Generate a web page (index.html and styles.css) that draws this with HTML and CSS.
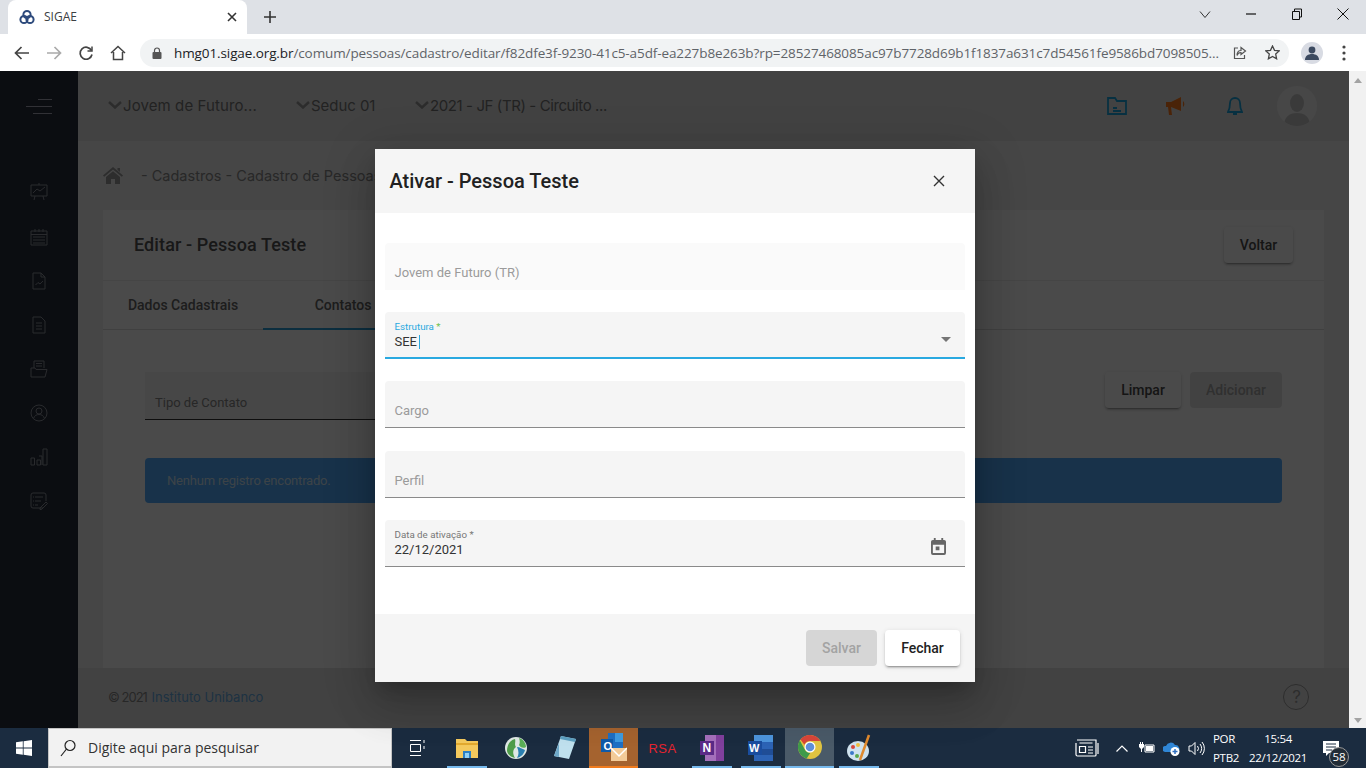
FILE: index.html
```html
<!DOCTYPE html>
<html lang="pt-BR">

<head>
    <meta charset="UTF-8">
    <title>SIGAE</title>
    <link rel="stylesheet" href="styles.css">
</head>

<body>
    <div class="tabstrip">
        <div class="tab">
            <svg class="favicon" width="16" height="16" viewBox="0 0 16 16" fill="none" stroke="#2d4a7c" stroke-width="2"><circle cx="8" cy="5.5" r="3.6"/><circle cx="5" cy="10.5" r="3.6"/><circle cx="11" cy="10.5" r="3.6"/></svg>
            <span class="tab-title">SIGAE</span>
            <svg width="10" height="10" viewBox="0 0 10 10" stroke="#333" stroke-width="1.6"><path d="M1 1l8 8M9 1l-8 8"/></svg>
        </div>
        <svg class="new-tab" width="12" height="12" viewBox="0 0 12 12" stroke="#333" stroke-width="1.6"><path d="M6 0v12M0 6h12"/></svg>
        <div class="win-controls">
            <svg width="12" height="12" viewBox="0 0 12 12" fill="none" stroke="#333"><path d="M1 3.5l5 6 5-6"/></svg>
            <svg width="12" height="12" viewBox="0 0 12 12" fill="none" stroke="#111" stroke-width="1.2"><path d="M1 6h10"/></svg>
            <svg width="12" height="12" viewBox="0 0 12 12" fill="none" stroke="#111"><path d="M1.5 3.5h7v8h-7zM3.5 3.5v-2.500h7v8h-2"/></svg>
            <svg width="12" height="12" viewBox="0 0 12 12" fill="none" stroke="#111"><path d="M.5.5l11 11M11.500.5l-11 11"/></svg>
        </div>
    </div>

    <div class="toolbar">
        <svg width="16" height="14" viewBox="0 0 16 14" fill="none" stroke="#444" stroke-width="1.7"><path d="M15 7H2M7.500 1L1.500 7l6 6"/></svg>
        <svg width="16" height="14" viewBox="0 0 16 14" fill="none" stroke="#aaa" stroke-width="1.7"><path d="M1 7h13M8.500 1l6 6-6 6"/></svg>
        <svg width="16" height="16" viewBox="0 0 16 16" fill="none" stroke="#444" stroke-width="1.7"><path d="M13.500 5.500A6 6 0 1 0 14 9.500"/><path d="M14 1.500v4.500H9.500" stroke-width="1.500"/></svg>
        <svg width="16" height="16" viewBox="0 0 16 16" fill="none" stroke="#444" stroke-width="1.500"><path d="M1 8l7-6.500L15 8M3.500 7v7.500h9V7"/></svg>
        <div class="omnibox">
            <svg width="10" height="12" viewBox="0 0 10 12" fill="#555"><rect x="0.500" y="5" width="9" height="7" rx="1"/><path d="M2.500 5V3.500a2.500 2.500 0 0 1 5 0V5" fill="none" stroke="#555" stroke-width="1.200"/></svg>
            <span class="url"><b>hmg01.sigae.org.br</b>/comum/pessoas/cadastro/editar/f82dfe3f-9230-41c5-a5df-ea227b8e263b?rp=28527468085ac97b7728d69b1f1837a631c7d54561fe9586bd7098505...</span>
            <svg width="14" height="14" viewBox="0 0 14 14" fill="none" stroke="#555" stroke-width="1.200"><path d="M5 2H1.500v10.500h10V9M8 1.500l4.500 3.500L8 8.500V6.500c-2 0-3.500 1-4 3 0-3 1.500-5 4-5z"/></svg>
            <svg width="15" height="15" viewBox="0 0 15 15" fill="none" stroke="#444" stroke-width="1.300"><path d="M7.500 1l2 4.300 4.700.6-3.500 3.200.9 4.700-4.100-2.300-4.100 2.300.9-4.700L.8 5.900l4.700-.6z"/></svg>
        </div>
        <div class="profile">
            <svg width="14" height="14" viewBox="0 0 14 14" fill="#3c4a60"><circle cx="7" cy="4" r="3.400"/><path d="M0 14c0-4 3-6 7-6s7 2 7 6z"/></svg>
        </div>
        <svg class="dots" width="4" height="16" viewBox="0 0 4 16" fill="#444"><circle cx="2" cy="2" r="1.600"/><circle cx="2" cy="8" r="1.600"/><circle cx="2" cy="14" r="1.600"/></svg>
    </div>

    <div class="viewport">
        <div class="app">
            <aside class="sidebar">
                <div class="burger"><i class="line-a"></i><i class="line-b"></i><i class="line-c"></i></div>
                <nav class="side-nav">
                    <svg width="18" height="20" viewBox="0 0 18 20"><path d="M1 3h16v11H1zM3 11l4-4 3 2 5-4M9 1v2M5 14l-1 4M13 14l1 4"/></svg>
                    <svg width="18" height="18" viewBox="0 0 18 18"><path d="M1 3h16v14H1zM1 6.500h16M5 1v3M9 1v3M13 1v3M3 9h12M3 12h12M3 15h12"/></svg>
                    <svg width="14" height="18" viewBox="0 0 14 18"><path d="M1 1h8l4 4v12H1zM9 1v4h4M3.500 13l2.500-2.500 2 1.500 3-3"/></svg>
                    <svg width="14" height="18" viewBox="0 0 14 18"><path d="M1 1h8l4 4v12H1zM4 7h6M4 10h6M4 13h6"/></svg>
                    <svg width="18" height="18" viewBox="0 0 18 18"><path d="M4 8V1h10v7M6 3.500h6M6 6h6M1 17V8h4l1 1.500h11L15 17z"/></svg>
                    <svg width="18" height="18" viewBox="0 0 18 18"><circle cx="9" cy="9" r="8"/><circle cx="9" cy="7" r="3"/><path d="M3.500 14.500c1-3 3-4 5.500-4s4.500 1 5.500 4"/></svg>
                    <svg width="18" height="18" viewBox="0 0 18 18"><path d="M1 10h3.500v7H1zM7 12h3.500v5H7zM13 1h4v16h-4zM9 8h3v9"/></svg>
                    <svg width="18" height="18" viewBox="0 0 18 18"><path d="M13 16H3a2 2 0 0 1-2-2V3a2 2 0 0 1 2-2h11a2 2 0 0 1 2 2v6M5 5h8M3 5h1M5 9h6M3 9h1M5 13h3M3 13h1M10 16l6-6 1.500 1.500-6 6H10z"/></svg>
                </nav>
            </aside>
            <div class="content">
                <header class="topbar">
                    <div class="context-list">
                        <span class="context"><svg width="14" height="8" viewBox="0 0 14 8" fill="none" stroke-width="2.500"><path d="M1 1l6 5.500L13 1"/></svg>Jovem de Futuro...</span>
                        <span class="context"><svg width="14" height="8" viewBox="0 0 14 8" fill="none" stroke-width="2.500"><path d="M1 1l6 5.500L13 1"/></svg>Seduc 01</span>
                        <span class="context"><svg width="14" height="8" viewBox="0 0 14 8" fill="none" stroke-width="2.500"><path d="M1 1l6 5.500L13 1"/></svg>2021 - JF (TR) - Circuito ...</span>
                    </div>
                    <div class="top-icons">
                        <svg class="top-folder" width="20" height="18" viewBox="0 0 20 18" fill="none" stroke="#1aa5e0" stroke-width="1.800"><path d="M1 1h7l2 3h9v13H1zM6 11h4M6 14h8"/></svg>
                        <svg class="top-horn" width="21" height="20" viewBox="0 0 21 20" fill="#ff7a1c"><path d="M0 6h5l10-5v14L5 11l1 8H3l-1-8H0z"/><path d="M17 5a4 4 0 0 1 0 6z"/></svg>
                        <svg class="top-bell" width="16" height="20" viewBox="0 0 16 20" fill="none" stroke="#1aa5e0" stroke-width="1.800"><path d="M8 2a5 5 0 0 1 5 5c0 4 1 7 2 9H1c1-2 2-5 2-9a5 5 0 0 1 5-5zM6 18h4"/></svg>
                        <div class="top-avatar">
                            <svg width="26" height="32" viewBox="0 0 26 32" fill="#c8c8c8"><ellipse cx="13" cy="9" rx="7" ry="9"/><path d="M0 32c0-9 5-13 13-13s13 4 13 13z"/></svg>
                        </div>
                    </div>
                </header>
                <main class="main">
                    <div class="crumbs">
                        <svg width="20" height="17" viewBox="0 0 20 17" fill="#9a9a9a"><path d="M10 0l10 8.500-1.200 1.300L10 2.500 1.200 9.800 0 8.500zM3 10l7-5.800 7 5.800v7h-5v-5H8v5H3zM14.500 1h2.500v4l-2.500-2z"/></svg>
                        <span>- Cadastros - Cadastro de Pessoas</span>
                    </div>
                    <section class="card">
                        <div class="card-head">
                            <h1>Editar - Pessoa Teste</h1>
                            <button class="btn btn-voltar">Voltar</button>
                        </div>
                        <div class="tabs">
                            <span class="page-tab">Dados Cadastrais</span>
                            <span class="page-tab page-tab-on">Contatos</span>
                        </div>
                        <div class="card-body">
                            <div class="contact-row">
                                <div class="contact-type">Tipo de Contato</div>
                                <div class="contact-btns">
                                    <button class="btn btn-limpar">Limpar</button>
                                    <button class="btn btn-add">Adicionar</button>
                                </div>
                            </div>
                            <div class="alert">Nenhum registro encontrado.</div>
                        </div>
                    </section>
                </main>
                <footer class="foot">
                    <span>© 2021 <span class="foot-link">Instituto Unibanco</span></span>
                    <span class="help">?</span>
                </footer>
            </div>

            <div class="backdrop">
                <div class="modal">
                    <div class="modal-head">
                        <h2>Ativar - Pessoa Teste</h2>
                        <svg width="12" height="12" viewBox="0 0 12 12" stroke="#333" stroke-width="1.400"><path d="M1 1l10 10M11 1L1 11"/></svg>
                    </div>
                    <div class="modal-body">
                        <div class="field field-off"><span class="field-hint">Jovem de Futuro (TR)</span></div>
                        <div class="field field-on">
                            <div class="field-text">
                                <span class="field-label">Estrutura <em>*</em></span>
                                <span class="field-value">SEE<i class="caret"></i></span>
                            </div>
                            <i class="select-arrow"></i>
                        </div>
                        <div class="field"><span class="field-hint">Cargo</span></div>
                        <div class="field"><span class="field-hint">Perfil</span></div>
                        <div class="field">
                            <div class="field-text">
                                <span class="field-label field-label-grey">Data de ativação *</span>
                                <span class="field-value">22/12/2021</span>
                            </div>
                            <svg class="cal" width="15" height="17" viewBox="0 0 16 18" fill="#666"><path d="M3 0h2v2h6V0h2v2h1a2 2 0 0 1 2 2v12a2 2 0 0 1-2 2H2a2 2 0 0 1-2-2V4a2 2 0 0 1 2-2h1zM2 7v9h12V7zM5 9h4v4H5z"/></svg>
                        </div>
                    </div>
                    <div class="modal-foot">
                        <button class="btn btn-salvar">Salvar</button>
                        <button class="btn btn-fechar">Fechar</button>
                    </div>
                </div>
            </div>
        </div>
        <div class="scrollbar"><i class="arrow-up"></i><i class="arrow-down"></i></div>
    </div>

    <div class="taskbar">
        <div class="start">
            <svg width="16" height="16" viewBox="0 0 16 16" fill="#fff"><path d="M0 2.300l6.800-1v6.300H0zM7.600 1.200L16 0v7.600H7.600zM0 8.400h6.800v6.300l-6.800-1zM7.600 8.400H16V16l-8.400-1.200z"/></svg>
        </div>
        <div class="search">
            <svg width="16" height="18" viewBox="0 0 16 18" fill="none" stroke="#222" stroke-width="1.200"><circle cx="10" cy="6.500" r="5"/><path d="M6.500 10L1 17"/></svg>
            <span>Digite aqui para pesquisar</span>
        </div>
        <div class="task-apps">
            <div class="task-app">
                <svg width="16" height="18" viewBox="0 0 16 18" fill="none" stroke="#fff"><path d="M.5 5.500h10v7H.5zM0 1.500h11M0 16.500h11M14 1v3M14 7v3"/></svg>
            </div>
            <div class="task-app task-open">
                <svg width="22" height="20" viewBox="0 0 22 20"><path d="M0 1h9l2 2h11v17H0z" fill="#f4c95d"/><path d="M0 5h22v2H0z" fill="#e2a92f"/><path d="M7 13h8v7H7z" fill="#2a7fc4"/><path d="M9 15h4v5H9z" fill="#8fd0f5"/></svg>
            </div>
            <div class="task-app">
                <svg width="22" height="22" viewBox="0 0 22 22"><circle cx="11" cy="11" r="11" fill="#dfe8e4"/><path d="M2 14c0-6 3-11 8-12 1 3-1 5 1 8-3 2-4 6-1 11-4-1-7-3-8-7z" fill="#4f9d4a"/><path d="M14 1c4 1 7 5 7 9-3 2-6 0-7-2 1-2 1-4 0-7z" fill="#5bae57"/><path d="M12 10c3 0 5 2 8 3-1 4-4 7-8 8 2-3 2-7 0-11z" fill="#2a7fb0"/></svg>
            </div>
            <div class="task-app">
                <svg width="22" height="26" viewBox="0 0 22 26"><path d="M7 1l15 3-7 20-15-3z" fill="#bfe0ee"/><path d="M7 1l15 3-1 3L6 4z" fill="#5c9fc0"/><path d="M5 8L0 21l5 1z" fill="#6fa8c8"/></svg>
            </div>
            <div class="task-app task-outlook">
                <svg width="26" height="28" viewBox="0 0 26 28"><path d="M7 0h15v18H7z" fill="#1f6fc4"/><path d="M14 0h8v9h-8z" fill="#3f9be0"/><path d="M0 6h12v13H0z" fill="#0f5aa8"/><text class="svg-letter" x="2.500" y="16.500" font-size="11" fill="#fff">O</text><path d="M10 15h16v13H10z" fill="#f3cb98"/><path d="M10 15l8 8 8-8" fill="none" stroke="#fff" stroke-width="1.500"/></svg>
            </div>
            <div class="task-app"><span class="rsa">RSA</span></div>
            <div class="task-app task-open">
                <svg width="24" height="26" viewBox="0 0 24 26"><path d="M5 0h19v26H5z" fill="#a46fbb"/><path d="M16 0h8v26h-8z" fill="#80409d"/><path d="M0 6h14v14H0z" fill="#5b2a87"/><text class="svg-letter" x="2.500" y="17" font-size="12" fill="#fff">N</text></svg>
            </div>
            <div class="task-app task-open">
                <svg width="25" height="26" viewBox="0 0 25 26"><path d="M6 0h19v26H6z" fill="#2c63b5"/><path d="M6 0h19v7H6z" fill="#4d95dc"/><path d="M6 14h19v6H6z" fill="#1f4d96"/><path d="M0 6h14v14H0z" fill="#1a4d9e"/><text class="svg-letter" x="1" y="17" font-size="11" fill="#fff">W</text></svg>
            </div>
            <div class="task-app task-active">
                <svg width="24" height="24" viewBox="0 0 24 24"><circle cx="12" cy="12" r="12" fill="#e0c341"/><path d="M12 0a12 12 0 0 1 10.400 6H12a6 6 0 0 0-5.600 3.800L2.500 4.500A12 12 0 0 1 12 0z" fill="#d8463a"/><path d="M1.800 5.500l5 9a6 6 0 0 0 5.400 3.500L8.700 23.500A12 12 0 0 1 1.800 5.500z" fill="#3f9a4a"/><circle cx="12" cy="12" r="5.500" fill="#fff"/><circle cx="12" cy="12" r="4.300" fill="#5f8fd8"/></svg>
            </div>
            <div class="task-app task-open">
                <svg width="24" height="28" viewBox="0 0 24 28"><ellipse cx="11" cy="17" rx="11" ry="10" fill="#cfe2ee"/><circle cx="6" cy="13" r="2" fill="#d8463a"/><circle cx="11" cy="11" r="2" fill="#f0c040"/><circle cx="5" cy="19" r="2" fill="#3a78c8"/><circle cx="10" cy="22" r="2" fill="#5aa84f"/><path d="M22 1L13 26" stroke="#e08a2e" stroke-width="2.500"/></svg>
            </div>
        </div>
        <div class="tray">
            <svg class="tray-news" width="24" height="18" viewBox="0 0 24 18" fill="none" stroke="#fff" stroke-width="1.200"><path d="M2 1h19v15a1 1 0 0 1-1 1H2.500A1.500 1.500 0 0 1 1 15.500V4M4.500 4h13M4.500 7.500h6v6h-6zM13 8h5M13 11h5M13 14h5M23 4v11"/></svg>
            <svg class="tray-up" width="12" height="7" viewBox="0 0 12 7" fill="none" stroke="#fff" stroke-width="1.200"><path d="M.5 6.500L6 1l5.500 5.500"/></svg>
            <svg class="tray-power" width="16" height="12" viewBox="0 0 16 12" fill="#fff"><path d="M0 2h1v-2h1v2h1v-2h1v2h1v3L3 7v3H2V7L0 5z"/><path d="M6 3h9v7H6z" fill="none" stroke="#fff"/><path d="M7 4h7v5H7z"/></svg>
            <svg class="tray-cloud" width="18" height="15" viewBox="0 0 18 15"><path d="M2 11a3 3 0 0 1 1-6 5 5 0 0 1 9-1 4 4 0 0 1 3 7z" fill="#2f86d6"/><circle cx="12" cy="10.500" r="4.500" fill="#fff"/><path d="M9.500 10.500h5M12 8v5" stroke="#2f6fc0" stroke-width="1.500"/></svg>
            <svg class="tray-sound" width="17" height="15" viewBox="0 0 17 15" fill="none" stroke="#fff"><path d="M1 5h2.500L7 1.500v12L3.500 10H1zM9.500 5a4 4 0 0 1 0 5M12 3a7 7 0 0 1 0 9M14 1a10 10 0 0 1 0 13"/></svg>
            <div class="tray-lang"><span>POR</span><span>PTB2</span></div>
            <div class="tray-clock"><span>15:54</span><span>22/12/2021</span></div>
            <div class="tray-notify">
                <svg width="16" height="15" viewBox="0 0 16 15" fill="#fff"><path d="M0 0h16v12H6l-3 3v-3H0z"/><path d="M3 3h10M3 6h10M3 9h6" stroke="#1b2c40"/></svg>
                <span class="notify-count">58</span>
            </div>
        </div>
    </div>
</body>

</html>
```

FILE: styles.css
```css
html,
body {
    height: 100%;
    margin: 0;
    padding: 0;
}

body {
    display: flex;
    flex-direction: column;
    overflow: hidden;
    font-family: Roboto, "Liberation Sans", sans-serif;
}

button {
    font-family: inherit;
}

svg {
    display: block;
    flex: none;
}

/* browser frame */
.tabstrip {
    height: 34px;
    background: #dee1e6;
    display: flex;
    align-items: flex-start;
    padding-left: 8px;
}

.tab {
    width: 239px;
    height: 34px;
    box-sizing: border-box;
    background: #fff;
    border-radius: 8px 8px 0 0;
    display: flex;
    align-items: center;
    padding: 0 10px 1px 11px;
}

.favicon {
    margin-right: 9px;
}

.tab-title {
    flex: auto;
    font: 12px "Open Sans", sans-serif;
    color: #3c4043;
}

.new-tab {
    margin: 11px 0 0 17px;
}

.win-controls {
    margin-left: auto;
    display: flex;
    gap: 34px;
    padding: 8px 17px 0 0;
}

.toolbar {
    height: 37px;
    background: #fff;
    display: flex;
    align-items: center;
    gap: 16px;
    padding-left: 14px;
    box-sizing: border-box;
}

.omnibox {
    width: 1149px;
    height: 28px;
    margin-left: -2px;
    box-sizing: border-box;
    padding: 0 9px 0 12px;
    background: #f1f3f4;
    border-radius: 14px;
    display: flex;
    align-items: center;
    gap: 7px;
}

.url {
    flex: auto;
    margin-left: 5px;
    white-space: nowrap;
    font: 13.500px "Open Sans", sans-serif;
    letter-spacing: -0.100px;
    color: #5f6368;
}

.url b {
    font-weight: 400;
    color: #202124;
}

.omnibox > svg:nth-of-type(2) {
    margin-right: 11px;
}

.profile {
    width: 22px;
    height: 22px;
    border-radius: 50%;
    background: #d8dbe3;
    display: flex;
    align-items: center;
    justify-content: center;
    margin-left: -4px;
}

.dots {
    margin-left: 3px;
}

/* page under the dialog */
.viewport {
    height: 657px;
    display: flex;
}

.app {
    flex: auto;
    display: flex;
    position: relative;
    background: #f0f0f0;
    min-width: 0;
}

.scrollbar {
    width: 17px;
    background: #f1f1f1;
    display: flex;
    flex-direction: column;
    justify-content: space-between;
    align-items: center;
    padding: 7px 0 5px;
    box-sizing: border-box;
}

.arrow-up,
.arrow-down {
    width: 0;
    height: 0;
    border-left: 4px solid transparent;
    border-right: 4px solid transparent;
}

.arrow-up {
    border-bottom: 5px solid #a3a3a3;
}

.arrow-down {
    border-top: 5px solid #a3a3a3;
}

.sidebar {
    width: 78px;
    flex: none;
    background: #282e3c;
}

.burger {
    padding: 28px 26px 0;
    display: flex;
    flex-direction: column;
    align-items: flex-end;
    gap: 6px;
}

.burger i {
    height: 1px;
    background: #aab;
}

.line-a {
    width: 14px;
}

.line-b {
    width: 26px;
}

.line-c {
    width: 19px;
}

.side-nav {
    margin-top: 68px;
    display: flex;
    flex-direction: column;
    align-items: center;
    gap: 26px;
}

.side-nav svg {
    fill: none;
    stroke: #8d929c;
    stroke-width: 1;
}

.content {
    flex: auto;
    min-width: 0;
    display: flex;
    flex-direction: column;
}

.topbar {
    height: 70px;
    flex: none;
    background: #e4e4e4;
    display: flex;
    align-items: center;
    padding-left: 30px;
    padding-right: 32px;
}

.context-list {
    display: flex;
    padding-bottom: 2px;
}

.context {
    display: flex;
    align-items: center;
    gap: 1px;
    font: 15px Inter, sans-serif;
    color: #777;
}

.context svg {
    stroke: #999;
}

.context:nth-child(1) {
    width: 188px;
    letter-spacing: 0.100px;
}

.context:nth-child(2) {
    width: 119px;
    letter-spacing: -0.050px;
}

.context:nth-child(3) {
    letter-spacing: -0.400px;
}

.top-icons {
    margin-left: auto;
    display: flex;
    align-items: center;
}

.top-horn {
    margin-left: 39px;
}

.top-bell {
    margin-left: 40px;
}

.top-avatar {
    width: 40px;
    height: 40px;
    margin-left: 34px;
    border-radius: 50%;
    background: #f4f4f4;
    display: flex;
    justify-content: center;
    align-items: flex-end;
    overflow: hidden;
}

.main {
    flex: auto;
    background: #f0f0f0;
    padding: 0 25px;
    display: flex;
    flex-direction: column;
    min-height: 0;
}

.crumbs {
    height: 69px;
    flex: none;
    display: flex;
    align-items: center;
    gap: 18px;
    font: 14.500px Inter, sans-serif;
    color: #8a8a8a;
}

.card {
    flex: auto;
    background: #fff;
    display: flex;
    flex-direction: column;
}

.card-head {
    height: 70px;
    flex: none;
    display: flex;
    align-items: center;
    justify-content: space-between;
    padding: 0 31px;
    border-bottom: 1px solid #eee;
}

.card-head h1 {
    margin: 0 0 2px;
    font-size: 18px;
    font-weight: 500;
    letter-spacing: 0.100px;
    color: #555;
}

.tabs {
    height: 48px;
    flex: none;
    display: flex;
    border-bottom: 1px solid #ddd;
}

.page-tab {
    width: 160px;
    display: flex;
    align-items: center;
    justify-content: center;
    font-size: 14px;
    font-weight: 500;
    color: #666;
    box-sizing: border-box;
}

.page-tab-on {
    border-bottom: 2px solid #2a9fd8;
    margin-bottom: -1px;
}

.card-body {
    padding: 42px 42px 0;
}

.contact-row {
    display: flex;
    justify-content: space-between;
    align-items: flex-start;
}

.contact-type {
    width: 640px;
    height: 48px;
    box-sizing: border-box;
    padding: 23px 10px 0;
    background: #f5f5f5;
    border-bottom: 1px solid #333;
    font-size: 13px;
    color: #888;
}

.contact-btns {
    display: flex;
    gap: 9px;
}

.btn {
    height: 36px;
    padding: 0;
    border: 0;
    border-radius: 4px;
    background: #fff;
    font-size: 14px;
    font-weight: 500;
    color: #4a4a4a;
    box-shadow: 0 3px 1px -2px rgba(0, 0, 0, .2), 0 2px 2px rgba(0, 0, 0, .14), 0 1px 5px rgba(0, 0, 0, .12);
}

.btn-voltar {
    width: 69px;
}

.btn-limpar {
    width: 76px;
}

.btn-add {
    width: 92px;
    background: #e4e4e4;
    color: #a5a5a5;
    box-shadow: none;
}

.alert {
    margin-top: 38px;
    height: 45px;
    padding-left: 22px;
    border-radius: 4px;
    background: #52abff;
    font-size: 13px;
    line-height: 45px;
    letter-spacing: -0.200px;
    color: #cfe6f5;
}

.foot {
    height: 60px;
    flex: none;
    background: #e4e4e4;
    display: flex;
    align-items: center;
    justify-content: space-between;
    padding: 0 40px 2px 30px;
    box-sizing: border-box;
    font: 13px Inter, sans-serif;
    letter-spacing: -1px;
    color: #888;
}

.foot-link {
    margin-left: 2px;
    letter-spacing: 0;
    color: #67abe4;
}

.help {
    width: 24px;
    height: 24px;
    border: 1px solid #9a9a9a;
    border-radius: 50%;
    text-align: center;
    font: 17px/24px Inter, sans-serif;
    color: #9a9a9a;
}

/* dialog */
.backdrop {
    position: absolute;
    inset: 0;
    background: rgba(0, 0, 0, .71);
    display: flex;
    justify-content: center;
    align-items: flex-start;
    padding-top: 78px;
    box-sizing: border-box;
}

.modal {
    width: 600px;
    height: 533px;
    background: #fff;
    display: flex;
    flex-direction: column;
    box-shadow: 0 11px 15px -7px rgba(0, 0, 0, .2), 0 24px 38px 3px rgba(0, 0, 0, .14), 0 9px 46px 8px rgba(0, 0, 0, .12);
}

.modal-head {
    height: 64px;
    flex: none;
    background: #f5f5f5;
    display: flex;
    align-items: center;
    justify-content: space-between;
    padding: 0 30px 0 15px;
}

.modal-head h2 {
    margin: 0;
    font-size: 20px;
    font-weight: 500;
    color: #212121;
}

.modal-body {
    flex: auto;
    padding: 30px 10px 0;
    display: flex;
    flex-direction: column;
    gap: 22.200px;
}

.field {
    height: 47px;
    box-sizing: border-box;
    padding: 0 9px 0 10px;
    background: #f5f5f5;
    border-bottom: 1px solid #8a8a8a;
    border-radius: 4px 4px 0 0;
    display: flex;
    align-items: center;
}

.field-off {
    background: #fafafa;
    border-bottom-color: #fafafa;
}

.field-on {
    border-bottom: 2px solid #29a9e0;
}

.field-hint {
    padding-top: 13px;
    font-size: 13px;
    color: #9b9b9b;
}

.field-text {
    flex: auto;
    display: flex;
    flex-direction: column;
    padding-top: 1px;
}

.field-label {
    font-size: 9.750px;
    line-height: 12px;
    color: #29a9e0;
}

.field-label em {
    font-style: normal;
    color: #6cc04a;
}

.field-label-grey {
    color: #777;
}

.field-value {
    padding-top: 1px;
    font-size: 13px;
    line-height: 15px;
    color: #333;
    display: flex;
    align-items: center;
}

.caret {
    width: 1px;
    height: 14px;
    margin-left: 2px;
    background: #29a9e0;
}

.select-arrow {
    width: 0;
    height: 0;
    margin: 10px 5px 0 0;
    border-left: 5px solid transparent;
    border-right: 5px solid transparent;
    border-top: 5px solid #757575;
}

.cal {
    margin: 8px 10px 0 0;
}

.modal-foot {
    height: 68px;
    flex: none;
    box-sizing: border-box;
    background: #f5f5f5;
    padding: 16px 15px 0 0;
    display: flex;
    justify-content: flex-end;
    gap: 8px;
}

.btn-salvar {
    width: 71px;
    padding-left: 1px;
    background: #d6d6d6;
    color: #a3a3a3;
    box-shadow: none;
}

.btn-fechar {
    width: 75px;
    padding-left: 1px;
    color: #222;
}

/* windows taskbar */
.taskbar {
    height: 40px;
    background: #1b2c40;
    display: flex;
    align-items: center;
    font-family: "Open Sans", sans-serif;
    color: #fff;
}

.start {
    width: 48px;
    display: flex;
    justify-content: center;
}

.search {
    width: 344px;
    height: 40px;
    box-sizing: border-box;
    background: #f2f2f2;
    border: 1px solid #c4c4c4;
    border-bottom-width: 2px;
    display: flex;
    align-items: center;
    gap: 12px;
    padding-left: 11px;
    font-size: 14px;
    color: #333;
}

.task-apps {
    display: flex;
    margin-left: 1px;
}

.task-app {
    width: 49px;
    height: 40px;
    box-sizing: border-box;
    display: flex;
    align-items: center;
    justify-content: center;
}

.task-open {
    background: linear-gradient(#76b9ed, #76b9ed) center bottom / 40px 2px no-repeat;
}

.task-outlook {
    background: #a5632f;
    border-bottom: 2px solid #ef7b1e;
}

.task-active {
    background: #4a5a68;
    border-bottom: 2px solid #76b9ed;
}

.rsa {
    font: 13px "Liberation Sans", sans-serif;
    letter-spacing: .5px;
    color: #e5232e;
}

.svg-letter {
    font-family: "Liberation Sans", sans-serif;
    font-weight: 700;
}

.tray {
    flex: auto;
    display: flex;
    align-items: center;
    padding-left: 192px;
}

.tray-up {
    margin-left: 17px;
}

.tray-power {
    margin-left: 11px;
}

.tray-cloud {
    margin-left: 8px;
}

.tray-sound {
    margin-left: 7px;
}

.tray-lang,
.tray-clock {
    display: flex;
    flex-direction: column;
    gap: 4px;
    font-size: 11.500px;
    line-height: 15px;
    letter-spacing: -0.300px;
}

.tray-lang {
    margin-left: 8px;
}

.tray-clock {
    margin-left: 9px;
    width: 60px;
    align-items: center;
}

.tray-notify {
    position: relative;
    margin-left: 15px;
}

.notify-count {
    position: absolute;
    left: 6px;
    top: 6px;
    width: 20px;
    height: 20px;
    border-radius: 50%;
    box-sizing: border-box;
    border: 1px solid #999;
    background: #222c36;
    text-align: center;
    font-size: 11.500px;
    line-height: 18px;
}
```
